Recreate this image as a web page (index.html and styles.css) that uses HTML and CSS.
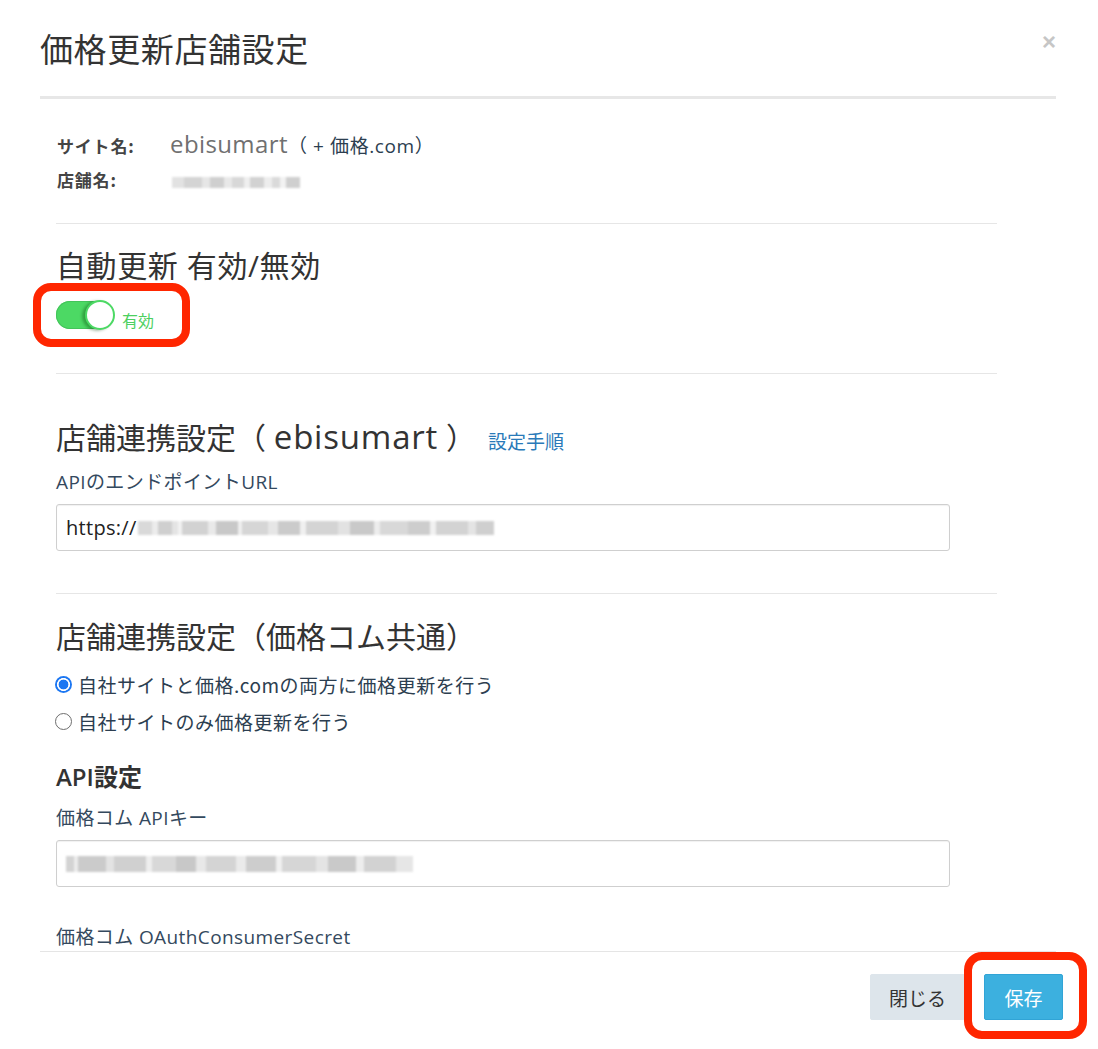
FILE: index.html
```html
<!DOCTYPE html>
<html lang="ja">
<head>
<meta charset="utf-8">
<title>価格更新店舗設定</title>
<link rel="stylesheet" href="styles.css">
</head>
<body>
<div class="page">
  <header class="modal-header">
    <h2 class="modal-title">価格更新店舗設定</h2>
    <button class="close" type="button">×</button>
  </header>

  <div class="modal-body">
    <div class="info">
      <div class="info-row">
        <span class="info-key">サイト名:</span>
        <span class="info-val"><span class="site">ebisumart</span><span class="site-sub">（ + 価格.com）</span></span>
      </div>
      <div class="info-row">
        <span class="info-key">店舗名:</span>
        <span class="info-val"><span class="blur blur-shop"></span></span>
      </div>
    </div>

    <hr class="divider">

    <h3 class="section-title title-auto">自動更新 有効/無効</h3>
    <div class="switch-row">
      <span class="switch"><span class="knob"></span></span>
      <span class="switch-label">有効</span>
    </div>

    <hr class="divider divider-b">

    <h3 class="section-title section-gap">店舗連携設定（ <span class="latin">ebisumart</span> ）<a class="help-link" href="#">設定手順</a></h3>
    <div class="field-label">APIのエンドポイントURL</div>
    <div class="input"><span class="input-text">https://</span><span class="blur blur-url"></span></div>

    <hr class="divider divider-c">

    <h3 class="section-title section-gap2">店舗連携設定（価格コム共通）</h3>
    <div class="radio radio-first"><span class="radio-dot checked"></span><span>自社サイトと価格.comの両方に価格更新を行う</span></div>
    <div class="radio radio-second"><span class="radio-dot"></span><span>自社サイトのみ価格更新を行う</span></div>

    <h4 class="sub-title">API設定</h4>
    <div class="field-label field-label-b">価格コム APIキー</div>
    <div class="input"><span class="blur blur-key"></span></div>
    <div class="field-label field-label-c">価格コム OAuthConsumerSecret</div>
  </div>

  <footer class="modal-footer">
    <div class="actions">
      <button class="btn btn-default" type="button">閉じる</button>
      <button class="btn btn-primary" type="button">保存</button>
    </div>
  </footer>

  <div class="mark mark-toggle"></div>
  <div class="mark mark-save"></div>
</div>
</body>
</html>
```

FILE: styles.css
```css
html, body {
  margin: 0;
  padding: 0;
  background: #fff;
}

body {
  font-family: "Open Sans", "Noto Sans CJK JP", sans-serif;
  color: #333;
}

.page {
  position: relative;
  width: 1098px;
  height: 1049px;
  overflow: hidden;
}

/* header */
.modal-header {
  display: flex;
  justify-content: space-between;
  align-items: flex-start;
  margin: 0 42px 0 40px;
  height: 96px;
  border-bottom: 3px solid #e7e7e7;
}

.modal-title {
  margin: 27px 0 0;
  font-family: "Noto Sans CJK JP", sans-serif;
  font-size: 33px;
  line-height: 42px;
  letter-spacing: 0.6px;
  font-weight: 400;
  color: #333;
}

.close {
  margin: 30px 0 0;
  padding: 0;
  border: 0;
  background: none;
  font-family: "Liberation Sans", sans-serif;
  font-size: 24px;
  line-height: 24px;
  font-weight: 700;
  color: #c6c6c6;
}

/* body */
.modal-body {
  box-sizing: border-box;
  width: 997px;
  height: 852px;
  overflow: hidden;
  padding: 27px 0 0 56px;
}

.info-row {
  display: flex;
  align-items: baseline;
  height: 36px;
  line-height: 36px;
}

.info-key {
  width: 113px;
  margin-left: 1px;
  font-family: "Noto Sans CJK JP", sans-serif;
  font-size: 17px;
  letter-spacing: 0.8px;
  font-weight: 700;
  color: #444;
}

.site {
  font-size: 24px;
  letter-spacing: 0.4px;
  color: #707070;
}

.site-sub {
  font-size: 19px;
  letter-spacing: 0.6px;
  color: #2c3e50;
}

.blur {
  display: inline-block;
  filter: blur(1.2px);
}

.blur-shop {
  width: 128px;
  height: 11px;
  vertical-align: -1px;
  margin-left: 2px;
  background: linear-gradient(90deg,
    #e2e2e2 0 12px, #d4d4d4 12px 30px, #e6e6e6 30px 38px, #cfcfcf 38px 52px,
    #e8e8e8 52px 60px, #d8d8d8 60px 72px, #efefef 72px 78px, #d2d2d2 78px 92px,
    #ededed 92px 100px, #dadada 100px 108px, #f2f2f2 108px 114px, #cfcfcf 114px 128px);
}

.divider {
  margin: 25px 0 0;
  border: 0;
  border-top: 1px solid #e6e6e6;
  height: 0;
}

.divider-b {
  margin-top: 43px;
}

.divider-c {
  margin-top: 42px;
}

.section-title {
  margin: 22px 0 0;
  font-family: "Open Sans", "Noto Sans CJK JP", sans-serif;
  font-size: 30px;
  line-height: 40px;
  font-weight: 400;
  color: #333;
}

.title-auto {
  letter-spacing: 0.6px;
}

.latin {
  font-size: 33px;
  letter-spacing: 0.8px;
}

.section-gap {
  margin-top: 43px;
}

.section-gap2 {
  margin-top: 23px;
}

.help-link {
  margin-left: 12px;
  font-family: "Noto Sans CJK JP", sans-serif;
  font-size: 19px;
  color: #2a7ab9;
  text-decoration: none;
}

/* switch */
.switch-row {
  display: flex;
  align-items: flex-end;
  gap: 8px;
  height: 30px;
  margin-top: 14px;
}

.switch {
  position: relative;
  display: block;
  width: 58px;
  height: 28px;
  margin-bottom: 1px;
  border-radius: 14px;
  background: #4cd964;
  box-shadow: inset 0 0 0 1px #43c45a;
}

.knob {
  position: absolute;
  top: -1px;
  right: -1px;
  width: 30px;
  height: 30px;
  box-sizing: border-box;
  border-radius: 50%;
  background: #fff;
  border: 2px solid #4cd964;
  box-shadow: -3px 1px 3px rgba(0, 60, 0, 0.35);
}

.switch-label {
  font-family: "Noto Sans CJK JP", sans-serif;
  font-size: 16px;
  line-height: 20px;
  color: #4cd060;
}

/* fields */
.field-label {
  margin-top: 8px;
  font-size: 19px;
  line-height: 26px;
  letter-spacing: 0.4px;
  color: #34495e;
}

.field-label-b {
  margin-top: 13px;
}

.field-label-c {
  margin-top: 37px;
}

.input {
  display: flex;
  align-items: center;
  box-sizing: border-box;
  width: 894px;
  height: 47px;
  margin-top: 9px;
  padding-left: 9px;
  border: 1px solid #cfcfcf;
  border-radius: 3px;
  box-shadow: inset 0 1px 1px rgba(0, 0, 0, 0.06);
  font-size: 20px;
  color: #222;
}

.input-text {
  letter-spacing: 0.3px;
}

.blur-url {
  width: 356px;
  height: 14px;
  margin-left: 1px;
  background: linear-gradient(90deg,
    #d9d9d9 0 14px, #ececec 14px 20px, #cfcfcf 20px 34px, #e4e4e4 34px 40px,
    #f2f2f2 40px 44px, #d2d2d2 44px 70px, #e9e9e9 70px 78px, #c8c8c8 78px 100px,
    #efefef 100px 104px, #d6d6d6 104px 130px, #e6e6e6 130px 140px, #cbcbcb 140px 162px,
    #f0f0f0 162px 168px, #d4d4d4 168px 200px, #e2e2e2 200px 212px, #c9c9c9 212px 236px,
    #ededed 236px 242px, #d8d8d8 242px 270px, #cdcdcd 270px 292px, #f1f1f1 292px 298px,
    #d3d3d3 298px 330px, #e4e4e4 330px 338px, #cfcfcf 338px 356px);
}

.blur-key {
  width: 347px;
  height: 16px;
  background: linear-gradient(90deg,
    #d3d3d3 0 8px, #ececec 8px 12px, #cbcbcb 12px 40px, #e3e3e3 40px 48px,
    #d0d0d0 48px 80px, #eeeeee 80px 86px, #d8d8d8 86px 110px, #c8c8c8 110px 130px,
    #e8e8e8 130px 140px, #d4d4d4 140px 170px, #eaeaea 170px 180px, #cdcdcd 180px 210px,
    #f0f0f0 210px 216px, #d6d6d6 216px 250px, #e4e4e4 250px 262px, #c9c9c9 262px 290px,
    #ededed 290px 298px, #d2d2d2 298px 330px, #e6e6e6 330px 347px);
}

/* radios */
.radio {
  display: flex;
  align-items: center;
  gap: 6px;
  height: 30px;
  font-family: "Noto Sans CJK JP", sans-serif;
  font-size: 19px;
  letter-spacing: 0.5px;
  color: #2c3e50;
}

.radio-first {
  margin-top: 12px;
}

.radio-second {
  margin-top: 7px;
}

.radio-dot {
  flex: none;
  width: 17px;
  height: 17px;
  box-sizing: border-box;
  margin-left: -1px;
  border-radius: 50%;
  border: 1px solid #6e6e6e;
  background: #fff;
}

.radio-dot.checked {
  border: 0;
  background: radial-gradient(circle, #1c77f2 0 4.6px, #fff 5.2px 6.2px, #1c77f2 6.8px);
}

.sub-title {
  margin: 26px 0 0;
  font-family: "Open Sans", "Noto Sans CJK JP", sans-serif;
  font-size: 24px;
  line-height: 30px;
  font-weight: 600;
  color: #333;
}

/* footer */
.modal-footer {
  display: flex;
  justify-content: flex-end;
  width: 1016px;
  margin-left: 40px;
  padding-top: 22px;
  border-top: 1px solid #e5e5e5;
}

.actions {
  display: flex;
  gap: 19px;
  margin-right: -7px;
}

.btn {
  height: 46px;
  padding: 0;
  border-radius: 2px;
  font-family: "Noto Sans CJK JP", sans-serif;
  font-size: 19px;
}

.btn-default {
  width: 95px;
  border: 1px solid #dde5eb;
  background: #dde5eb;
  color: #333;
}

.btn-primary {
  width: 79px;
  border: 1px solid #31a4d6;
  background: #3cb0df;
  color: #fff;
}

/* annotation marks drawn over the screenshot */
.mark {
  position: absolute;
  box-sizing: border-box;
  border: 8px solid #ff2600;
  border-radius: 18px;
  pointer-events: none;
}

.mark-toggle {
  left: 33px;
  top: 283px;
  width: 157px;
  height: 64px;
}

.mark-save {
  left: 964px;
  top: 952px;
  width: 123px;
  height: 87px;
}
```
